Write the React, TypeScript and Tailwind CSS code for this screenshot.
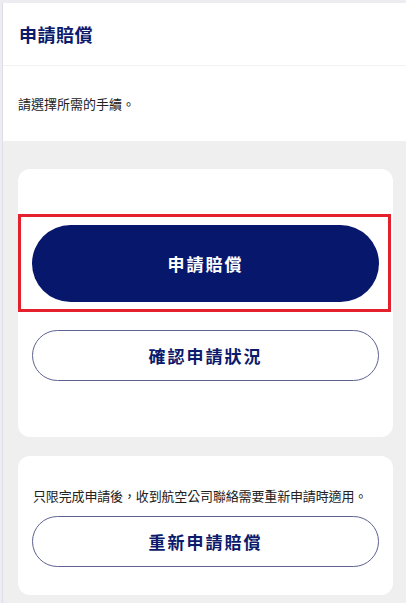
export default function App() {
  const font = { fontFamily: '"Noto Sans CJK TC", "Noto Sans", sans-serif' }
  return (
    <div
      className="w-[406px] h-[603px] overflow-hidden bg-[#ececf1] pt-[3px] pl-[2px]"
      style={font}
    >
      <div className="h-full border-l border-[#dedee8] bg-[#efefef]">
        {/* Header */}
        <div className="h-[63px] bg-white flex items-center pl-[16px] border-b border-[#f2f2f2]">
          <h1 className="text-[18px] font-bold text-[#0c1a6c] tracking-[0.5px]">申請賠償</h1>
        </div>
        <div className="h-[75px] bg-white flex items-center pl-[15px]">
          <p className="text-[13px] text-[#222]">請選擇所需的手續。</p>
        </div>

        <div className="ml-[15px] mr-[13px] pt-[28px] flex flex-col gap-[19px]">
          {/* Card 1 */}
          <div className="bg-white rounded-[12px] py-[56px] px-[14px] flex flex-col gap-[28px]">
            <div className="relative">
              <div className="absolute -left-[14px] -right-[12px] -top-[11px] -bottom-[10px] border-[3px] border-[#e3202c]" />
              <button className="relative w-full h-[77px] rounded-full bg-[#07186c] text-white text-[17px] font-bold tracking-[2px]">
                申請賠償
              </button>
            </div>
            <button className="w-full h-[51px] rounded-full border border-[#5d6290] bg-white text-[#0c1a6c] text-[17px] font-bold tracking-[2px]">
              確認申請狀況
            </button>
          </div>

          {/* Card 2 */}
          <div className="bg-white rounded-[12px] pt-[30px] pb-[28px] px-[14px] flex flex-col gap-[10px]">
            <p className="text-[13px] leading-[20px] text-[#222] tracking-[-0.15px] pl-px">
              只限完成申請後，收到航空公司聯絡需要重新申請時適用。
            </p>
            <button className="w-full h-[51px] rounded-full border border-[#5d6290] bg-white text-[#0c1a6c] text-[17px] font-bold tracking-[2px]">
              重新申請賠償
            </button>
          </div>
        </div>
      </div>
    </div>
  )
}
